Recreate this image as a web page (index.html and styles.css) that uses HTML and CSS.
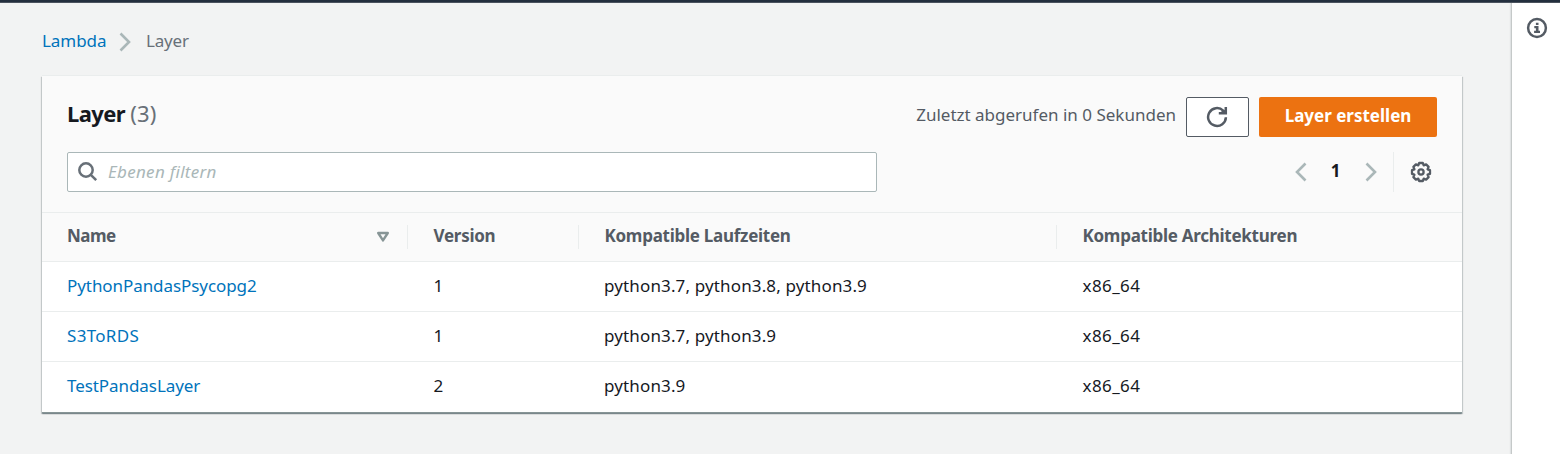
FILE: index.html
```html
<!DOCTYPE html>
<html lang="de">
<head>
<meta charset="utf-8">
<title>Layer – Lambda</title>
<link rel="stylesheet" href="styles.css">
</head>
<body>
<div class="topbar"></div>
<div class="shell">
  <main class="content">
    <nav class="breadcrumb">
      <a href="#" class="link crumb-link">Lambda</a>
      <svg class="crumb-sep" width="12" height="20" viewBox="0 0 12 20"><path d="M1.5 1.5 10 10l-8.5 8.5"/></svg>
      <span class="crumb-current">Layer</span>
    </nav>
    <section class="card">
      <header class="card-head">
        <div class="title-row">
          <h2 class="title">Layer <span class="count">(3)</span></h2>
          <div class="actions">
            <span class="fetched">Zuletzt abgerufen in 0 Sekunden</span>
            <button class="btn btn-refresh" aria-label="Aktualisieren">
              <svg width="22" height="22" viewBox="0 0 22 22"><path class="stroke" d="M19.9 11.2A8.9 8.9 0 1 1 17.2 4.6L18.8 6.2"/><path class="stroke" d="M19.8 1v6.2h-7"/><path class="fill" d="m15.2 5.6 3.6-1.8v3.4h-3.6z"/></svg>
            </button>
            <button class="btn btn-primary">Layer erstellen</button>
          </div>
        </div>
        <div class="tools-row">
          <label class="search">
            <svg width="20" height="20" viewBox="0 0 20 20"><circle class="stroke" cx="8" cy="8" r="6.7"/><path class="stroke" d="m12.8 12.8 5.4 5.4"/></svg>
            <span class="placeholder">Ebenen filtern</span>
          </label>
          <div class="pager">
            <svg class="chev" width="12" height="20" viewBox="0 0 12 20"><path d="M10.5 1.5 2 10l8.5 8.5"/></svg>
            <span class="page">1</span>
            <svg class="chev" width="12" height="20" viewBox="0 0 12 20"><path d="M1.5 1.5 10 10l-8.5 8.5"/></svg>
            <span class="settings">
              <svg width="22" height="22" viewBox="-11 -11 22 22"><path class="stroke gear" d="M-1.8-9H1.8L2.7-6.6 5.1-7.6 7.6-5.1 6.6-2.7 9-1.8V1.8L6.6 2.7 7.6 5.1 5.1 7.6 2.7 6.6 1.8 9H-1.8L-2.7 6.6-5.1 7.6-7.6 5.1-6.6 2.7-9 1.8V-1.8L-6.6-2.7-7.6-5.1-5.1-7.6-2.7-6.6Z"/><circle class="stroke gear" r="2.6"/></svg>
            </span>
          </div>
        </div>
      </header>
      <div class="grid grid-head">
        <div class="th"><span class="th-label">Name</span><svg width="14" height="12" viewBox="0 0 14 12"><path class="sort" d="M2.2 2h9.6L7 9.4Z"/></svg></div>
        <div class="th">Version</div>
        <div class="th">Kompatible Laufzeiten</div>
        <div class="th">Kompatible Architekturen</div>
      </div>
      <div class="grid row"><div><a href="#" class="link">PythonPandasPsycopg2</a></div><div>1</div><div class="runtimes">python3.7, python3.8, python3.9</div><div class="arch">x86_64</div></div>
      <div class="grid row"><div><a href="#" class="link link-caps">S3ToRDS</a></div><div>1</div><div class="runtimes">python3.7, python3.9</div><div class="arch">x86_64</div></div>
      <div class="grid row"><div><a href="#" class="link">TestPandasLayer</a></div><div>2</div><div class="runtimes">python3.9</div><div class="arch">x86_64</div></div>
    </section>
  </main>
  <aside class="rail">
    <svg width="22" height="22" viewBox="0 0 22 22"><circle class="stroke" cx="11" cy="11" r="8.9"/><path class="fill" d="M9.9 5.7h2.6v2.4H9.9zM8.3 9h4.2v4.7H14V16H8.1v-2.3h1.8v-2.4H8.3z"/></svg>
  </aside>
</div>
</body>
</html>
```
FILE: styles.css
```css
* { box-sizing: border-box; }
body {
  margin: 0;
  height: 454px;
  display: flex;
  flex-direction: column;
  overflow: hidden;
  background: #f2f3f3;
  color: #16191f;
  font: 17px/24px "Noto Sans", "Open Sans", sans-serif;
}
svg { display: block; flex: none; fill: none; }
.stroke { stroke: #545b64; stroke-width: 2.5; }
.gear { stroke-width: 2.3; stroke-linejoin: round; }
.fill { fill: #545b64; }
.link { color: #0073bb; text-decoration: none; letter-spacing: -.07px; }
.link-caps { letter-spacing: .3px; }
.topbar { height: 3px; flex: none; background: #232f3e; border-bottom: 1px solid #4b535f; }
.shell { flex: 1; display: flex; }
.content { flex: 1; padding: 26px 49px 0 42px; }
.rail {
  width: 49px;
  padding: 14px 0 0 14px;
  background: #fff;
  border-left: 1px solid #c5c9c9;
  box-shadow: -1px 0 1px rgba(0, 28, 36, .08);
}
.breadcrumb { display: flex; align-items: center; height: 24px; }
.crumb-sep { margin: 2px 14.5px 0 13px; stroke: #aab7b8; stroke-width: 2.6; }
.crumb-current { color: #687078; letter-spacing: -.15px; }
.card {
  margin-top: 23px;
  width: 1420px;
  background: #fff;
  box-shadow: 0 -1px 0 #eaeded, 0 1px 1px 0 rgba(0, 28, 36, .3), 1px 1px 1px 0 rgba(0, 28, 36, .15), -1px 1px 1px 0 rgba(0, 28, 36, .15);
  border-bottom: 1px solid #879596;
}
.card-head { height: 136px; padding: 21px 25px 0; background: #fafafa; }
.title-row, .tools-row { display: flex; justify-content: space-between; }
.title-row { height: 40px; }
.title { margin: 2px 0 0; font-size: 22px; line-height: 28px; font-weight: 700; white-space: nowrap; letter-spacing: -.6px; }
.count { color: #687078; font-weight: 400; letter-spacing: .2px; }
.actions { display: flex; align-items: center; }
.fetched { color: #545b64; margin: -4px 10px 0 0; white-space: nowrap; }
.btn { height: 40px; border-radius: 2px; font: inherit; display: flex; align-items: center; justify-content: center; padding: 0; }
.btn-refresh { width: 63px; margin-right: 10px; padding-right: 1px; background: #fff; border: 1px solid #545b64; }
.btn-primary { width: 178px; padding-bottom: 2px; background: #ec7211; border: 0; color: #fff; font-weight: 700; white-space: nowrap; }
.tools-row { margin-top: 15px; height: 40px; }
.search { width: 810px; height: 40px; display: flex; align-items: center; padding-left: 10px; gap: 10px; border: 1px solid #aab7b8; border-radius: 2px; background: #fff; }
.search .stroke { stroke: #687078; }
.placeholder { color: #aab7b8; font-style: italic; letter-spacing: .3px; }
.pager { display: flex; align-items: center; }
.chev { stroke: #aab7b8; stroke-width: 2.6; }
.page { width: 58px; padding: 0 1px 2px 0; text-align: center; font-weight: 700; }
.settings { margin-left: 16px; height: 40px; padding: 0 5px 0 16px; display: flex; align-items: center; border-left: 1px solid #eaeded; }
.grid { display: grid; grid-template-columns: 366px 171px 478px 405px; align-items: center; border-top: 1px solid #eaeded; white-space: nowrap; }
.grid > div { padding-left: 25.5px; }
.grid > div:first-child { padding-left: 25px; }
.grid-head { height: 49px; background: #fafafa; color: #545b64; font-weight: 700; letter-spacing: -.27px; }
.th { height: 24px; line-height: 22px; border-right: 1px solid #eaeded; }
.th:first-child { display: flex; align-items: center; justify-content: space-between; padding-right: 17px; }
.th:last-child { border-right: 0; }
.th-label { padding-bottom: 2px; letter-spacing: -.5px; }
.sort { stroke: #879596; stroke-width: 2.4; stroke-linejoin: round; }
.row { height: 50px; padding-bottom: 2px; }
.row:last-child { height: 51px; padding-bottom: 3px; }
.grid .runtimes { padding-left: 25px; letter-spacing: .14px; }
.grid .arch { padding-left: 25.5px; letter-spacing: .4px; }
```
